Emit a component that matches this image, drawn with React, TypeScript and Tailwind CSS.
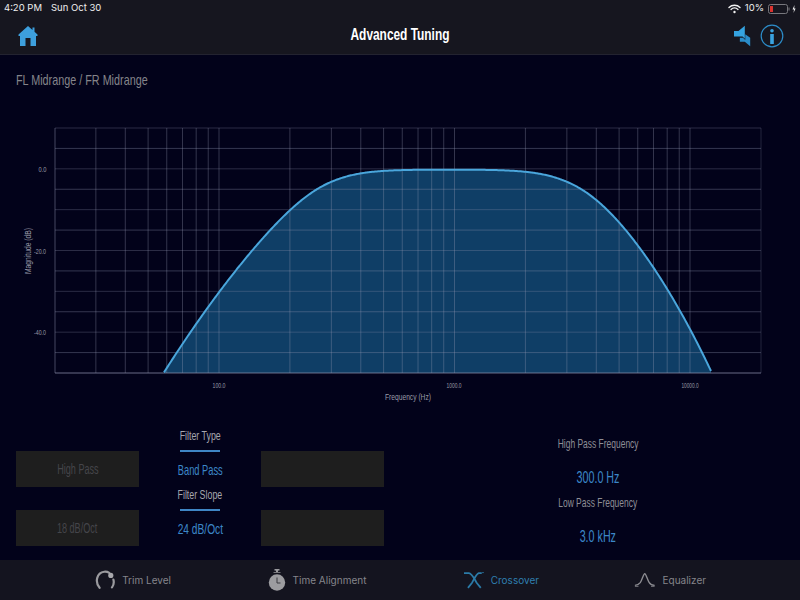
import React from "react";

const face = "font-['Liberation_Sans',sans-serif]";
const X0 = 55, X1 = 761, Y0 = 128, Y1 = 373;
const fx = (f: number) => 219 + 235.5 * (Math.log10(f) - 2);
const freqs = [30, 40, 50, 60, 70, 80, 90, 100, 200, 300, 400, 500, 600, 700, 800, 900, 1000, 2000, 3000, 4000, 5000, 6000, 7000, 8000, 9000, 10000];
const hs = Array.from({ length: 13 }, (_, i) => Y0 + (i * (Y1 - Y0)) / 12);

function curve() {
  const out: [number, number][] = [];
  for (let x = 150; x <= 722; x += 1) {
    const f = Math.pow(10, 2 + (x - 219) / 235.5);
    const lh = Math.log10(300 / f);
    const ll = Math.log10(f / 3000);
    const nh = 4.9 + 2.95 * Math.max(0, lh);
    const nl = 4.9 + 6.0 * Math.pow(Math.max(0, ll), 1.3);
    const db = -10 * Math.log10(1 + Math.pow(10, nh * lh)) - 10 * Math.log10(1 + Math.pow(10, nl * ll));
    const y = 169.5 - db * 4.08;
    if (y <= Y1) out.push([x, y]);
  }
  return out;
}

function Lbl({ x, y, w, size, children, transform }: { x?: number; y?: number; w: number; size: number; children: string; transform?: string }) {
  return (
    <text x={x} y={y} transform={transform} textAnchor="middle" fontSize={size} textLength={w} lengthAdjust="spacingAndGlyphs">
      {children}
    </text>
  );
}

function Chart() {
  const c = curve();
  const line = c.map((p) => `${p[0]} ${p[1].toFixed(2)}`).join(" L");
  const last = c[c.length - 1];
  return (
    <svg width="800" height="290" viewBox="0 120 800 290" className="block">
      <path d={`M${c[0][0]} ${Y1} L${line} L${last[0]} ${Y1} Z`} fill="#0f3e66" />
      {hs.map((y, i) => (
        <line key={i} x1={X0} x2={X1} y1={y} y2={y} stroke="#8a8ea8" strokeOpacity={i % 2 === 0 ? 0.3 : 0.38} strokeWidth="1" />
      ))}
      <line x1={X0} x2={X0} y1={Y0} y2={Y1} stroke="#8a8ea8" strokeOpacity="0.5" />
      <line x1={X1} x2={X1} y1={Y0} y2={Y1} stroke="#8a8ea8" strokeOpacity="0.25" />
      {freqs.map((f) => (
        <line key={f} x1={fx(f)} x2={fx(f)} y1={Y0} y2={Y1} stroke="#9a9eb6" strokeOpacity="0.33" strokeWidth="1" />
      ))}
      <line x1={X0} x2={X1} y1={Y1} y2={Y1} stroke="#8a8ea8" strokeOpacity="0.55" />
      <path d={`M${line}`} fill="none" stroke="#4aa6dc" strokeWidth="2" />
      <g fill="#9a9ca8" fontFamily="Liberation Sans, sans-serif">
        <Lbl x={42.5} y={172} w={8} size={8}>0.0</Lbl>
        <Lbl x={40} y={253.5} w={12} size={8}>-20.0</Lbl>
        <Lbl x={40} y={335} w={12} size={8}>-40.0</Lbl>
        <Lbl x={219} y={388} w={13} size={8}>100.0</Lbl>
        <Lbl x={454} y={388} w={15} size={8}>1000.0</Lbl>
        <Lbl x={690} y={388} w={17} size={8}>10000.0</Lbl>
        <Lbl x={408} y={400} w={46} size={9}>Frequency (Hz)</Lbl>
        <Lbl transform="translate(31 251) rotate(-90)" w={46} size={9}>Magnitude (dB)</Lbl>
      </g>
    </svg>
  );
}

function Home() {
  return (
    <svg width="20" height="22" viewBox="0 0 20 22">
      <path d="M10 1 L14.5 5 V2.5 H16.5 V6.8 L19.5 9.5 V11 H18 V21 H12.5 V13 H7.5 V21 H2 V11 H.5 V9.5 Z" fill="#3d9fdd" />
    </svg>
  );
}

function Speaker() {
  return (
    <svg width="18" height="24" viewBox="0 0 20 24">
      <path d="M0 6.5 H5 L12 .5 V15 L9.5 12.5 H0 Z" fill="#35a3e0" />
      <path d="M6.5 14 H10 L12.5 16.5 V10 L18 14 V23.5 L12 18.5 H6.5 Z" fill="#2a8cc9" />
    </svg>
  );
}

function Info() {
  return (
    <svg width="24" height="24" viewBox="0 0 24 24">
      <circle cx="12" cy="12" r="10.8" fill="none" stroke="#2c8cc8" strokeWidth="1.2" />
      <circle cx="12" cy="6.8" r="1.8" fill="#3aa3e0" />
      <rect x="10.2" y="10" width="3.6" height="10" fill="#3aa3e0" />
    </svg>
  );
}

function Wifi() {
  return (
    <svg width="13" height="10" viewBox="0 0 13 10" fill="none" stroke="#f2f2f2" strokeLinecap="round">
      <path d="M1 3.4 C4 .6 9 .6 12 3.4" strokeWidth="1.4" />
      <path d="M3 5.4 C5 3.6 8 3.6 10 5.4" strokeWidth="1.4" />
      <circle cx="6.5" cy="8" r="1.2" fill="#f2f2f2" stroke="none" />
    </svg>
  );
}

function Battery() {
  return (
    <svg width="28" height="10" viewBox="0 0 28 10">
      <rect x=".5" y=".5" width="19" height="9" rx="2" fill="none" stroke="#77777d" />
      <rect x="2" y="2" width="3" height="6" fill="#d8322e" />
      <rect x="20.5" y="3.5" width="1" height="3" fill="#77777d" />
      <path d="M26.5 1 L24.5 5.4 H26 L25.5 9 L27.6 4.4 H26.2 Z" fill="#f0f0f0" />
    </svg>
  );
}

function TrimIcon() {
  return (
    <svg width="22" height="22" viewBox="0 0 22 22" fill="none">
      <path d="M5 19.5 C-.5 13 2 3 10 2 C12 1.8 14 2.2 15.5 3.2" stroke="#9a9a9e" strokeWidth="2.4" strokeLinecap="round" />
      <path d="M18.5 19 C20.5 16.5 20.8 13.5 20 10.5" stroke="#9a9a9e" strokeWidth="2.4" strokeLinecap="round" />
      <circle cx="17.2" cy="6" r="2.8" fill="#a8a8ac" />
    </svg>
  );
}

function ClockIcon() {
  return (
    <svg width="18" height="22" viewBox="0 0 18 22">
      <rect x="6.5" y="0" width="5" height="1.6" fill="#9a9a9e" />
      <rect x="8" y="1" width="2" height="3" fill="#9a9a9e" />
      <path d="M5.5 3.5 H12.5" stroke="#77777c" strokeWidth="1" />
      <circle cx="9" cy="13.5" r="8.2" fill="#9c9ca0" />
      <path d="M9 8.5 V14 H12.5" stroke="#3a3a40" strokeWidth="1" fill="none" />
    </svg>
  );
}

function XoverIcon() {
  return (
    <svg width="20" height="20" viewBox="0 0 20 20" fill="none" stroke="#2b7ba8" strokeWidth="1.8">
      <path d="M0 3 H5 C8 3 11 10 13 13 L17 18" />
      <path d="M4 18 L8 13 C10 10 12 4 15 3 H18" />
      <path d="M18.5 2.5 H20" strokeWidth="1" />
    </svg>
  );
}

function EqIcon() {
  return (
    <svg width="24" height="20" viewBox="0 0 24 20" fill="none" stroke="#8d8d92" strokeWidth="1.5">
      <path d="M1 16 C3 16 5 15.5 7 13 C9 10 10.5 3 12 3 C13.5 3 15 10 17 13 C18.5 15.5 20.5 16 23 16" />
      <path d="M1 17 H5 M19 17 H23" strokeWidth="1" />
    </svg>
  );
}

function Tab({ icon, label, active, w }: { icon: React.ReactNode; label: string; active?: boolean; w: string }) {
  return (
    <div className={`flex items-center justify-center gap-[7px] whitespace-nowrap ${w}`}>
      {icon}
      <span className={`text-[10px] font-['Inter',sans-serif] ${active ? "text-[#2f7fb0]" : "text-[#85858b]"}`}>{label}</span>
    </div>
  );
}

function Box({ label }: { label?: string }) {
  return (
    <div className={`w-[123px] h-9 bg-[#1e1e1e] flex items-center justify-center text-[14px] text-[#45454a] ${face}`}>
      <span className="inline-block whitespace-nowrap scale-x-[0.65]">{label}</span>
    </div>
  );
}

function Picker({ title, value, squeeze }: { title: string; value: string; squeeze: string }) {
  return (
    <div className={`w-[122px] h-[59px] flex flex-col items-center ${face}`}>
      <div className="h-[17px] text-[13px] leading-[17px] text-[#a6a6ae] whitespace-nowrap scale-x-[0.68]">{title}</div>
      <div className="mt-[6px] w-10 h-[1.5px] bg-[#3f86c4]" />
      <div className={`mt-[9px] text-[15px] leading-[18px] text-[#3c87c8] whitespace-nowrap ${squeeze}`}>{value}</div>
    </div>
  );
}

function Readout({ title, value }: { title: string; value: string }) {
  return (
    <div className={`h-[59px] flex flex-col items-center ${face}`}>
      <div className="h-[17px] text-[13px] leading-[17px] text-[#8e8e96] whitespace-nowrap scale-x-[0.65]">{title}</div>
      <div className="mt-[16px] text-[17px] leading-5 text-[#3c87c8] whitespace-nowrap scale-x-[0.63]">{value}</div>
    </div>
  );
}

export default function App() {
  return (
    <div className={`w-[800px] h-[600px] overflow-hidden flex flex-col bg-[#02021a] ${face}`}>
      <header className="h-[55px] shrink-0 bg-[#16161f] border-b border-[#232330] flex flex-col">
        <div className="h-[17px] pl-1 pr-[4px] flex items-center justify-between text-[9.5px] text-[#eeeeee] font-['Inter',sans-serif]">
          <div className="flex gap-[9px]">
            <span>4:20 PM</span>
            <span>Sun Oct 30</span>
          </div>
          <div className="flex items-center gap-[4px]">
            <Wifi />
            <span>10%</span>
            <Battery />
          </div>
        </div>
        <div className="flex-1 flex items-center justify-between pl-[18px] pr-[16px] relative">
          <Home />
          <div className="absolute left-0 right-0 -mt-[1px] text-center text-white font-bold text-[17px] whitespace-nowrap scale-x-[0.7]">Advanced Tuning</div>
          <div className="flex items-center gap-[8px]">
            <Speaker />
            <Info />
          </div>
        </div>
      </header>
      <div className="h-[65px] shrink-0 pl-4 pt-[15px] text-[15px] leading-5 text-[#85858a]">
        <span className="inline-block whitespace-nowrap origin-left scale-x-[0.72]">FL Midrange / FR Midrange</span>
      </div>
      <Chart />
      <div className="flex-1 flex items-start pl-4 pt-[17px]">
        <div className="flex flex-col gap-[23px] mt-[24px]">
          <Box label="High Pass" />
          <Box label="18 dB/Oct" />
        </div>
        <div className="flex flex-col">
          <Picker title="Filter Type" value="Band Pass" squeeze="scale-x-[0.62]" />
          <Picker title="Filter Slope" value="24 dB/Oct" squeeze="scale-x-[0.68]" />
        </div>
        <div className="flex flex-col gap-[23px] mt-[24px]">
          <Box />
          <Box />
        </div>
        <div className="flex-1 flex flex-col mt-[8px]">
          <div className="ml-[60px] w-[308px] flex flex-col items-center">
            <Readout title="High Pass Frequency" value="300.0 Hz" />
            <Readout title="Low Pass Frequency" value="3.0 kHz" />
          </div>
        </div>
      </div>
      <footer className="h-10 shrink-0 bg-[#14141f] flex items-center pl-[95px]">
        <Tab w="w-[76px]" icon={<TrimIcon />} label="Trim Level" />
        <div className="w-[96px]" />
        <Tab w="w-[100px]" icon={<ClockIcon />} label="Time Alignment" />
        <div className="w-[97px]" />
        <Tab w="w-[75px]" active icon={<XoverIcon />} label="Crossover" />
        <div className="w-[95px]" />
        <Tab w="w-[72px]" icon={<EqIcon />} label="Equalizer" />
      </footer>
    </div>
  );
}
